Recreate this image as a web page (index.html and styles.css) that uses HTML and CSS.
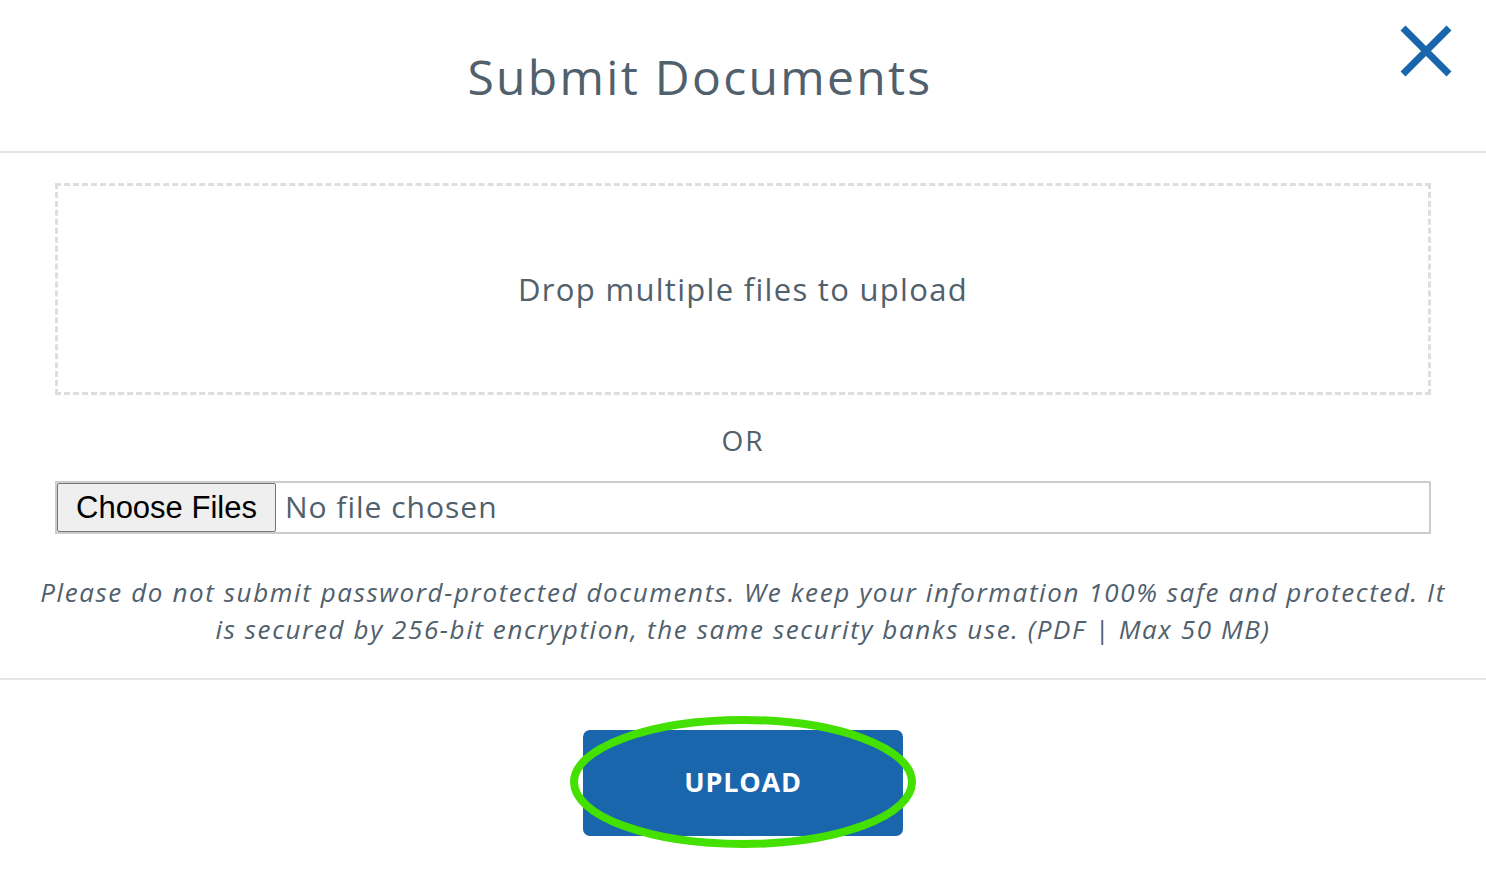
FILE: index.html
```html
<!DOCTYPE html>
<html lang="en">
<head>
    <meta charset="UTF-8">
    <meta name="viewport" content="width=device-width, initial-scale=1.0">
    <title>Submit Documents</title>
    <link rel="stylesheet" href="styles.css">
</head>
<body>
    <div class="modal">
        <div class="modal-header">
            <h2 class="modal-title">Submit Documents</h2>
            <button class="close-btn" aria-label="Close">
                <svg width="54" height="54" viewBox="0 0 54 54">
                    <path d="M3 3 L49 49 M49 3 L3 49" stroke="#1a66ad" stroke-width="7" fill="none"/>
                </svg>
            </button>
        </div>

        <div class="modal-body">
            <div class="dropzone">Drop multiple files to upload</div>
            <div class="or">OR</div>
            <input type="file" class="file-input" multiple>
            <p class="note">Please do not submit password-protected documents. We keep your information 100% safe and protected. It is secured by 256-bit encryption, the same security banks use. (PDF | Max 50 MB)</p>
        </div>

        <div class="modal-footer">
            <div class="upload-wrap">
                <button class="upload-btn">UPLOAD</button>
                <svg class="highlight" width="348" height="134" viewBox="0 0 348 134">
                    <ellipse cx="174" cy="67" rx="169" ry="62" fill="none" stroke="#44e000" stroke-width="8"/>
                </svg>
            </div>
        </div>
    </div>
</body>
</html>
```

FILE: styles.css
```css
body {
    margin: 0;
    background: white;
    font-family: 'Open Sans', sans-serif;
    color: #50606c;
}

.modal {
    width: 1486px;
}

.modal-header {
    display: flex;
    align-items: flex-start;
    height: 151px;
    border-bottom: 2px solid #e5e5e5;
}

.modal-title {
    flex: 1;
    margin: 0;
    padding-top: 44px;
    text-align: center;
    font-size: 48px;
    font-weight: 500;
    letter-spacing: 2.3px;
    color: #50606c;
}

.close-btn {
    width: 86px;
    padding: 25px 0 0 0;
    border: none;
    background: none;
    cursor: pointer;
    text-align: left;
}

.modal-body {
    padding: 30px 35px 0;
}

.dropzone {
    margin: 0 20px;
    height: 206px;
    border: 3px dashed #dedede;
    display: flex;
    align-items: center;
    justify-content: center;
    font-size: 31px;
    letter-spacing: 1.3px;
}

.or {
    text-align: center;
    font-size: 28px;
    letter-spacing: 2px;
    margin-top: 26px;
}

.file-input {
    display: block;
    box-sizing: border-box;
    margin: 22px 20px 0;
    width: 1376px;
    height: 53px;
    border: 2px solid #cccccc;
    font-family: 'Open Sans', sans-serif;
    font-size: 30px;
    letter-spacing: 1px;
    color: #50606c;
}

.file-input::file-selector-button {
    height: 49px;
    margin: 0 9px 0 0;
    padding: 0 18px;
    border: 1px solid #767676;
    border-radius: 2px;
    background: #efefef;
    font-family: 'Liberation Sans', Arial, sans-serif;
    font-size: 31px;
    letter-spacing: 0;
    color: #000;
}

.note {
    margin: 40px 0 0;
    text-align: center;
    font-style: italic;
    font-size: 26px;
    letter-spacing: 1.6px;
    line-height: 37px;
    padding-bottom: 30px;
}

.modal-footer {
    border-top: 2px solid #e5e5e5;
    display: flex;
    justify-content: center;
    padding: 50px 0 42px;
}

.upload-wrap {
    position: relative;
    height: 106px;
}

.upload-btn {
    display: block;
    width: 320px;
    height: 106px;
    padding: 0 0 4px;
    border: none;
    border-radius: 7px;
    background: #1a66ad;
    color: white;
    font-family: 'Open Sans', sans-serif;
    font-weight: 700;
    font-size: 27px;
    letter-spacing: 0.8px;
    cursor: pointer;
}

.highlight {
    position: absolute;
    left: -14px;
    top: -15px;
    pointer-events: none;
}
```
